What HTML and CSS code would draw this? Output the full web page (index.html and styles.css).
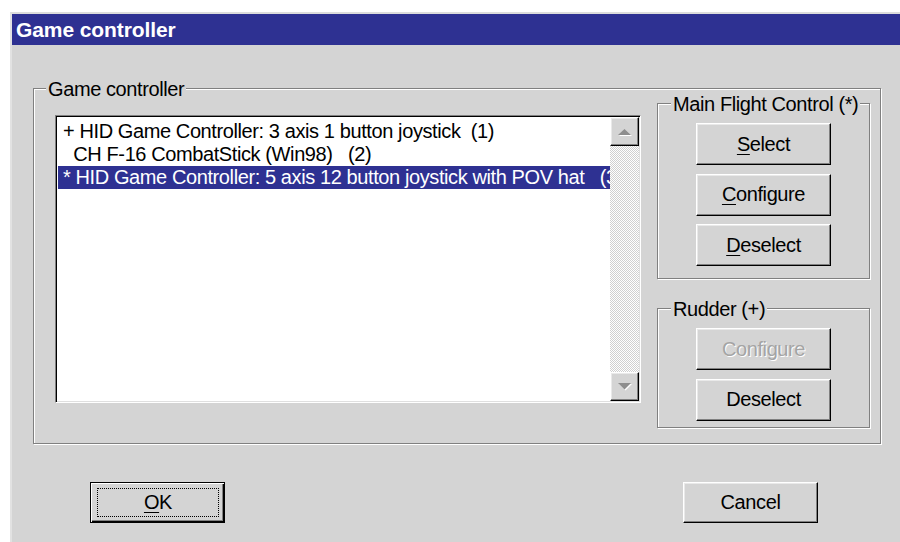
FILE: index.html
```html
<!DOCTYPE html>
<html lang="en">
<head>
<meta charset="utf-8">
<title>Game controller</title>
<link rel="stylesheet" href="styles.css">
</head>
<body>
<div class="window">
  <div class="titlebar">Game controller</div>
  <div class="client">
    <div class="group group-main">
      <span class="group-label">Game controller</span>
      <div class="listbox">
        <ul class="items">
          <li class="item">+ HID Game Controller: 3 axis 1 button joystick  (1)</li>
          <li class="item">  CH F-16 CombatStick (Win98)   (2)</li>
          <li class="item item-selected">* HID Game Controller: 5 axis 12 button joystick with POV hat   (3)</li>
        </ul>
        <div class="scrollbar">
          <div class="sb-button">
            <svg width="14" height="8" viewBox="0 0 14 8"><path d="M1 8H14L7.5 2Z" fill="#fff"/><path d="M0 7H13L6.5 1Z" fill="#8e8e8e"/></svg>
          </div>
          <div class="sb-track"></div>
          <div class="sb-button">
            <svg width="14" height="8" viewBox="0 0 14 8"><path d="M1 1H14L7.5 7.5Z" fill="#fff"/><path d="M0 0H13L6.5 6.5Z" fill="#8e8e8e"/></svg>
          </div>
        </div>
      </div>
      <div class="side">
        <div class="group group-flight">
          <span class="group-label">Main Flight Control (*)</span>
          <button class="btn" type="button"><u>S</u>elect</button>
          <button class="btn" type="button"><u>C</u>onfigure</button>
          <button class="btn" type="button"><u>D</u>eselect</button>
        </div>
        <div class="group group-rudder">
          <span class="group-label">Rudder (+)</span>
          <button class="btn" type="button" disabled>Configure</button>
          <button class="btn" type="button">Deselect</button>
        </div>
      </div>
    </div>
    <div class="footer">
      <button class="btn btn-default" type="button"><span class="focus-rect"><u>O</u>K</span></button>
      <button class="btn" type="button">Cancel</button>
    </div>
  </div>
</div>
</body>
</html>
```

FILE: styles.css
```css
* {
  box-sizing: border-box;
}

html,
body {
  margin: 0;
  height: 100%;
}

body {
  background: #fff;
  color: #000;
  font-family: "Liberation Sans", Arial, sans-serif;
  font-size: 20px;
  letter-spacing: -0.4px;
  overflow: hidden;
}

/* dialog frame */
.window {
  margin: 12px 0 0 10px;
  height: 530px;
  background: #d4d4d4;
  border-top: 2px solid #dcdcdc;
  border-left: 2px solid #e2e2e2;
}

.titlebar {
  height: 31px;
  padding-left: 4px;
  background: #2e3192;
  color: #fff;
  font-size: 21px;
  font-weight: bold;
  line-height: 31px;
  letter-spacing: -0.1px;
}

.client {
  padding: 43px 0 0 21px;
}

/* etched group boxes */
.group {
  position: relative;
  border: 1px solid #808080;
  box-shadow: inset 1px 1px 0 #fff, 1px 1px 0 #fff;
}

.group-label {
  position: absolute;
  top: -11px;
  left: 13px;
  padding: 0 2px;
  background: #d4d4d4;
  line-height: 22px;
  white-space: nowrap;
}

.group-main {
  width: 848px;
  height: 356px;
  display: flex;
  align-items: flex-start;
  gap: 16px;
  padding: 14px 10px 0 21px;
}

.group-main > .group-label {
  left: 12px;
}

/* list box */
.listbox {
  flex: none;
  display: flex;
  width: 586px;
  height: 288px;
  margin-top: 12px;
  padding: 1px;
  background: #fff;
  border: 1px solid;
  border-color: #808080 #fff #fff #808080;
  box-shadow: inset 1px 1px 0 #000, inset -1px -1px 0 #dfdfdf;
}

.items {
  flex: 1;
  min-width: 0;
  margin: 0;
  padding: 3px 0 0 1px;
  list-style: none;
  overflow: hidden;
}

.item {
  height: 23px;
  padding-left: 5px;
  line-height: 23px;
  white-space: pre;
}

.item-selected {
  background: #2e3192;
  color: #fff;
}

.scrollbar {
  flex: none;
  width: 29px;
  display: flex;
  flex-direction: column;
}

.sb-button {
  flex: none;
  width: 29px;
  height: 29px;
  display: flex;
  align-items: center;
  justify-content: center;
  background: #d4d4d4;
  border: 1px solid;
  border-color: #fff #000 #000 #fff;
  box-shadow: inset -1px -1px 0 #808080, inset 1px 1px 0 #e9e9e9;
}

.sb-track {
  flex: 1;
  background: repeating-conic-gradient(#fff 0 25%, #d0d0d0 0 50%) 0 0 / 2px 2px;
}

/* right-hand column */
.side {
  flex: none;
  width: 213px;
  display: flex;
  flex-direction: column;
  gap: 29px;
}

.group-flight,
.group-rudder {
  display: flex;
  flex-direction: column;
  align-items: center;
  gap: 8.5px;
  padding-top: 19px;
}

.group-flight {
  height: 176px;
}

.group-rudder {
  height: 120px;
}

/* push buttons */
.btn {
  flex: none;
  width: 135px;
  height: 42px;
  padding: 0;
  font: inherit;
  letter-spacing: inherit;
  color: #000;
  background: #d4d4d4;
  border: 1px solid;
  border-color: #fff #000 #000 #fff;
  border-radius: 0;
  box-shadow: inset -1px -1px 0 #808080, inset 1px 1px 0 #e9e9e9;
}

.btn:disabled {
  color: #a4a4a4;
  text-shadow: 1px 1px 0 #fff;
}

.btn u {
  text-decoration-thickness: 1px;
  text-underline-offset: 3px;
}

.footer {
  display: flex;
  gap: 458px;
  margin-top: 38px;
  padding-left: 57px;
}

.footer .btn {
  height: 41px;
}

.btn-default {
  display: flex;
  padding: 5px 5px 5px 6px;
  border-color: #000;
  box-shadow: inset 1px 1px 0 #fff, inset -1px -1px 0 #000, inset -2px -2px 0 #808080;
}

.focus-rect {
  flex: 1;
  display: flex;
  align-items: center;
  justify-content: center;
  border: 1px dotted #000;
}
```
